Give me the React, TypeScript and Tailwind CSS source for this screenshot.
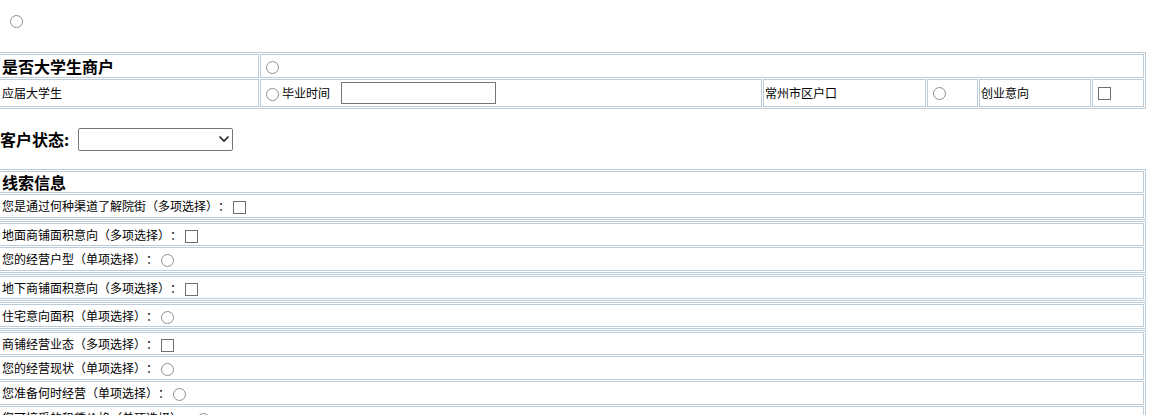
import clsx from 'clsx'
import type { ReactNode } from 'react'

type Question = { label: string; kind: 'check' | 'radio' }

// each inner array is rendered as its own bordered table
const groups: Question[][] = [
  [
    { label: '地面商铺面积意向（多项选择）：', kind: 'check' },
    { label: '您的经营户型（单项选择）：', kind: 'radio' },
  ],
  [{ label: '地下商铺面积意向（多项选择）：', kind: 'check' }],
  [{ label: '住宅意向面积（单项选择）：', kind: 'radio' }],
  [
    { label: '商铺经营业态（多项选择）：', kind: 'check' },
    { label: '您的经营现状（单项选择）：', kind: 'radio' },
    { label: '您准备何时经营（单项选择）：', kind: 'radio' },
    { label: '您可接受的租赁价格（单项选择）：', kind: 'radio' },
  ],
]

function Radio({ className }: { className?: string }) {
  return (
    <input
      type="radio"
      className={clsx(
        'appearance-none size-[13px] shrink-0 rounded-full border border-[#8e8e8e] bg-white',
        className
      )}
    />
  )
}

function Check({ className }: { className?: string }) {
  return (
    <input
      type="checkbox"
      className={clsx('appearance-none size-[13px] shrink-0 border border-[#6f6f6f] bg-white', className)}
    />
  )
}

function Table({ children }: { children: ReactNode }) {
  return (
    <div className="-ml-[3px] w-[1149px] flex flex-col gap-px border border-[#bccdd9] p-px">
      {children}
    </div>
  )
}

function Cell({ className, children }: { className?: string; children?: ReactNode }) {
  return (
    <div className={clsx('flex items-center border border-[#bccdd9] px-px whitespace-nowrap', className)}>
      {children}
    </div>
  )
}

function QuestionRow({ q, first }: { q: Question; first: boolean }) {
  return (
    <div className={clsx('flex', first ? 'h-[23px]' : 'h-[24px]')}>
      <Cell className="flex-1 pl-[2px]">
        <span className="leading-none">{q.label}</span>
        {q.kind === 'check' ? <Check className="ml-[3px] mt-[3px]" /> : <Radio className="ml-[3px] mt-[3px]" />}
      </Cell>
    </div>
  )
}

export default function App() {
  return (
    <div className="min-h-screen bg-white text-[12px] text-black font-['Noto_Sans_CJK_SC','Noto_Sans',sans-serif] [text-spacing-trim:space-all]">
      <div className="h-[52px] pl-[10px] pt-[14px]">
        <Radio />
      </div>

      <Table>
        <div className="flex h-[24px] gap-px">
          <Cell className="w-[260px] pl-[2px] text-[16px] font-bold">
            <span className="leading-none">是否大学生商户</span>
          </Cell>
          <Cell className="flex-1">
            <Radio className="ml-[4px] mt-[2px]" />
          </Cell>
        </div>
        <div className="flex h-[28px] gap-px">
          <Cell className="w-[260px] pl-[2px]">
            <span className="leading-none">应届大学生</span>
          </Cell>
          <Cell className="w-[502px]">
            <Radio className="ml-[4px] mt-[2px]" />
            <span className="ml-[3px] leading-none">毕业时间</span>
            <input type="text" className="ml-[11px] h-[22px] w-[155px] border border-[#767676] bg-white" />
          </Cell>
          <Cell className="w-[163px]">
            <span className="leading-none">常州市区户口</span>
          </Cell>
          <Cell className="w-[51px]">
            <Radio className="ml-[4px]" />
          </Cell>
          <Cell className="w-[112px]">
            <span className="leading-none">创业意向</span>
          </Cell>
          <Cell className="w-[52px]">
            <Check className="ml-[4px]" />
          </Cell>
        </div>
      </Table>

      <div className="flex h-[60px] items-center">
        <span className="text-[16px] font-bold leading-none">客户状态:</span>
        <div className="relative ml-[9px]">
          <select className="block h-[23px] w-[155px] appearance-none rounded-[2px] border border-[#767676] bg-white" />
          <svg
            className="pointer-events-none absolute right-[3px] top-[7px]"
            width="12"
            height="8"
            viewBox="0 0 12 8"
            fill="none"
          >
            <path d="M1.5 1.5 6 6l4.5-4.5" stroke="#222" strokeWidth="1.6" />
          </svg>
        </div>
      </div>

      <div className="flex flex-col gap-px">
        <Table>
          <div className="flex h-[22px]">
            <Cell className="flex-1 pl-[2px] text-[16px] font-bold">
              <span className="leading-none">线索信息</span>
            </Cell>
          </div>
          <div className="flex h-[24px]">
            <Cell className="flex-1 pl-[2px]">
              <span className="leading-none">您是通过何种渠道了解院街（多项选择）：</span>
              <Check className="ml-[3px] mt-[3px]" />
            </Cell>
          </div>
        </Table>
        {groups.map((g, i) => (
          <Table key={i}>
            {g.map((q, j) => (
              <QuestionRow key={q.label} q={q} first={j === 0} />
            ))}
          </Table>
        ))}
      </div>
    </div>
  )
}
